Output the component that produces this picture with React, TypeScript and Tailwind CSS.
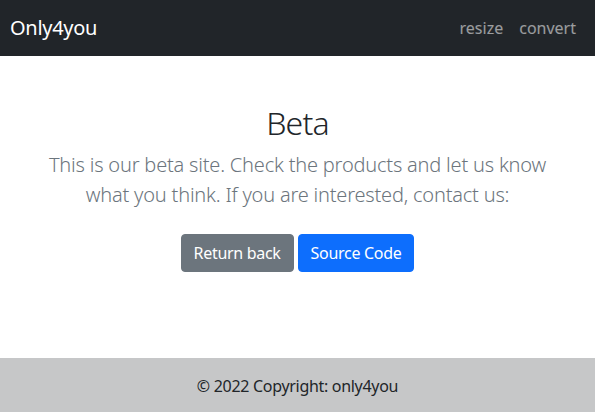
const font = { fontFamily: '"Noto Sans", "Open Sans", sans-serif' };

export default function App() {
  return (
    <div className="flex min-h-[414px] flex-col bg-white text-[#212529]" style={font}>
      <nav className="flex h-14 items-center justify-between bg-[#212529] pl-[10px] pr-[11px]">
        <a href="#" className="text-[20px] leading-[30px] tracking-[-0.3px] text-white">
          Only4you
        </a>
        <div className="flex">
          <a href="#" className="px-2 text-base leading-6 text-white/55">
            resize
          </a>
          <a href="#" className="px-2 text-base leading-6 text-white/55">
            convert
          </a>
        </div>
      </nav>

      <main className="flex-1 px-3 pb-[86px] pt-12 text-center">
        <h1 className="mb-2 text-[32px] font-light leading-[38px] tracking-tight">Beta</h1>
        <p className="mb-6 whitespace-nowrap text-[20px] font-light leading-[30px] tracking-[-0.2px] text-[#6c757d]">
          This is our beta site. Check the products and let us know
          <br />
          what you think. If you are interested, contact us:
        </p>
        <div className="flex justify-center gap-1">
          <a
            href="#"
            className="rounded-[4px] border border-[#6c757d] bg-[#6c757d] px-3 py-[6px] text-base leading-6 tracking-[-0.3px] text-white"
          >
            Return back
          </a>
          <a
            href="#"
            className="rounded-[4px] border border-[#0d6efd] bg-[#0d6efd] px-3 py-[6px] text-base leading-6 tracking-[-0.3px] text-white"
          >
            Source Code
          </a>
        </div>
      </main>

      <footer className="bg-[#c6c7c8] p-4 text-center text-base leading-6 tracking-[-0.3px]">
        © 2022 Copyright: only4you
      </footer>
    </div>
  );
}
